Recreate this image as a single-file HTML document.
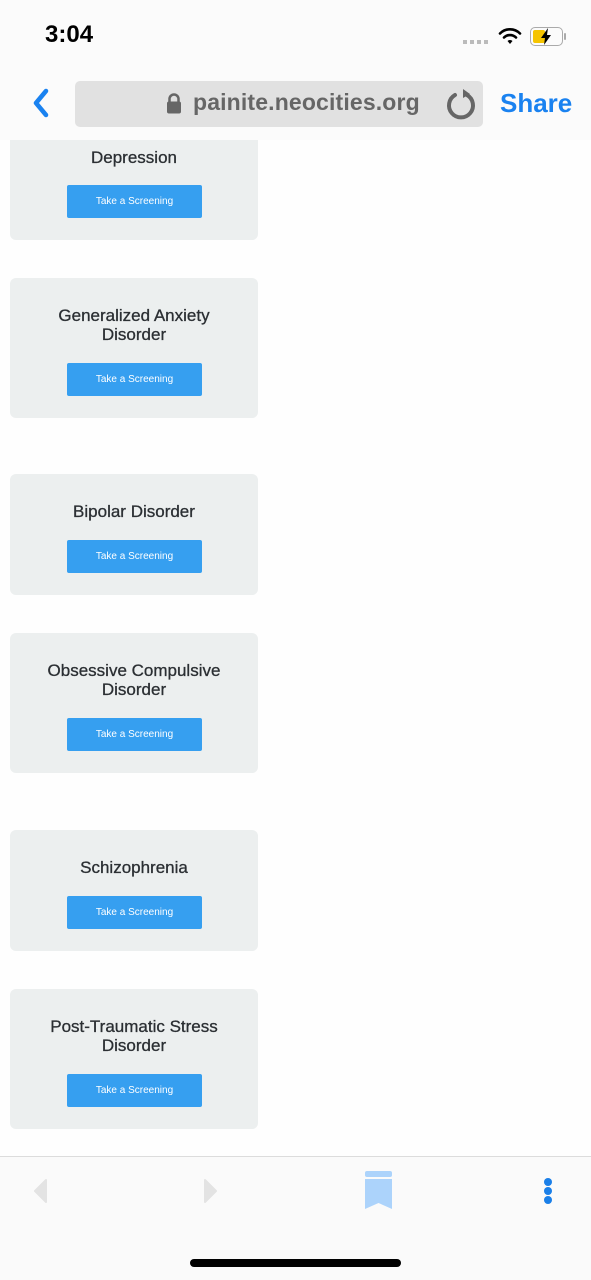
<!DOCTYPE html>
<html><head><meta charset="utf-8"><style>
*{margin:0;padding:0;box-sizing:border-box}
body{width:591px;height:1280px;background:#fefefe;font-family:"Liberation Sans",Arial,sans-serif;position:relative;overflow:hidden}
.abs{position:absolute}
.card{position:absolute;left:10px;width:248px;background:#ecefef;border-radius:6px;text-align:center;color:#2b2f33}
.t{position:absolute;left:0;right:0;font-size:17px;line-height:19px;-webkit-text-stroke:0.3px #2b2f33}
.btn{position:absolute;left:57px;width:135px;height:33px;background:#369ff0;border-radius:2px;color:#fff;font-size:10px;line-height:33px}
</style></head><body>
<div class="abs" style="left:0;top:0;width:591px;height:140px;background:#fbfbfb"></div>
<div class="abs" style="left:45px;top:21px;font-size:24px;font-weight:bold;color:#000">3:04</div>
<div class="abs" style="left:463px;top:40px;width:26px;height:4px;background:repeating-linear-gradient(90deg,#bbb 0 4px,transparent 4px 7px)"></div>
<svg class="abs" style="left:498px;top:27px" width="24" height="18" viewBox="0 0 24 18"><path d="M2 6.5a14 14 0 0 1 20 0" stroke="#000" stroke-width="2.6" fill="none" stroke-linecap="round"/><path d="M6 10.5a8.5 8.5 0 0 1 12 0" stroke="#000" stroke-width="2.6" fill="none" stroke-linecap="round"/><path d="M9.5 14l2.5 3 2.5-3a3.5 3.5 0 0 0-5 0z" fill="#000"/></svg>
<div class="abs" style="left:530px;top:27px;width:33px;height:19px;border:1.5px solid #aaa;border-radius:5px"></div>
<div class="abs" style="left:533px;top:30px;width:12px;height:13px;background:#f5c400;border-radius:2px"></div>
<div class="abs" style="left:564px;top:33px;width:2px;height:7px;background:#aaa;border-radius:1px"></div>
<svg class="abs" style="left:540px;top:28px" width="12" height="17" viewBox="0 0 12 17"><path d="M8 0L1 10h4l-1 7 7-10H7z" fill="#000"/></svg>
<svg class="abs" style="left:32px;top:88px" width="18" height="30" viewBox="0 0 18 30"><path d="M14 3L4 15l10 12" stroke="#1a82f0" stroke-width="4.5" fill="none" stroke-linecap="round" stroke-linejoin="round"/></svg>
<div class="abs" style="left:75px;top:81px;width:408px;height:46px;background:#e1e1e1;border-radius:5px"></div>
<svg class="abs" style="left:165px;top:92px" width="18" height="22" viewBox="0 0 18 22"><path d="M4.5 10V7a4.5 4.5 0 0 1 9 0v3" stroke="#666" stroke-width="2.5" fill="none"/><rect x="2" y="9.5" width="14" height="12" rx="2" fill="#666"/></svg>
<div class="abs" style="left:193px;top:89px;font-size:23px;font-weight:bold;color:#666;letter-spacing:0.15px">painite.neocities.org</div>
<svg class="abs" style="left:444px;top:86px" width="34" height="36" viewBox="0 0 34 36"><path d="M11 9A12 12 0 1 0 23 9" stroke="#666" stroke-width="4" fill="none" stroke-linecap="round"/><path d="M19 3l7 5-7 4z" fill="#666"/></svg>
<div class="abs" style="left:500px;top:88px;font-size:26px;font-weight:bold;color:#1a82f0">Share</div>

<div class="card" style="top:140px;height:100px;border-radius:0 0 6px 6px"><div class="t" style="top:8px">Depression</div><div class="btn" style="top:45px">Take a Screening</div></div>
<div class="card" style="top:278px;height:140px"><div class="t" style="top:28px">Generalized Anxiety<br>Disorder</div><div class="btn" style="top:85px">Take a Screening</div></div>
<div class="card" style="top:474px;height:121px"><div class="t" style="top:28px">Bipolar Disorder</div><div class="btn" style="top:66px">Take a Screening</div></div>
<div class="card" style="top:633px;height:140px"><div class="t" style="top:28px">Obsessive Compulsive<br>Disorder</div><div class="btn" style="top:85px">Take a Screening</div></div>
<div class="card" style="top:830px;height:121px"><div class="t" style="top:28px">Schizophrenia</div><div class="btn" style="top:66px">Take a Screening</div></div>
<div class="card" style="top:989px;height:140px"><div class="t" style="top:28px">Post-Traumatic Stress<br>Disorder</div><div class="btn" style="top:85px">Take a Screening</div></div>

<div class="abs" style="left:0;top:1156px;width:591px;height:124px;background:#fafafa;border-top:1px solid #dcdcdc"></div>
<svg class="abs" style="left:33px;top:1179px" width="16" height="24" viewBox="0 0 16 24"><path d="M13 1L2 12l11 11z" fill="#e3e3e3" stroke="#e3e3e3" stroke-width="2" stroke-linejoin="round"/></svg>
<svg class="abs" style="left:202px;top:1179px" width="16" height="24" viewBox="0 0 16 24"><path d="M3 1l11 11L3 23z" fill="#e3e3e3" stroke="#e3e3e3" stroke-width="2" stroke-linejoin="round"/></svg>
<svg class="abs" style="left:365px;top:1171px" width="28" height="40" viewBox="0 0 28 40"><rect x="0" y="0" width="27" height="6" rx="2" fill="#acd3fb"/><path d="M0 8h27v30l-13.5-6L0 38z" fill="#acd3fb"/></svg>
<div class="abs" style="left:544px;top:1178px;width:8px;height:8px;border-radius:50%;background:#1a7fe8"></div>
<div class="abs" style="left:544px;top:1187px;width:8px;height:8px;border-radius:50%;background:#1a7fe8"></div>
<div class="abs" style="left:544px;top:1196px;width:8px;height:8px;border-radius:50%;background:#1a7fe8"></div>
<div class="abs" style="left:190px;top:1259px;width:211px;height:8px;border-radius:4px;background:#000"></div>
</body></html>
